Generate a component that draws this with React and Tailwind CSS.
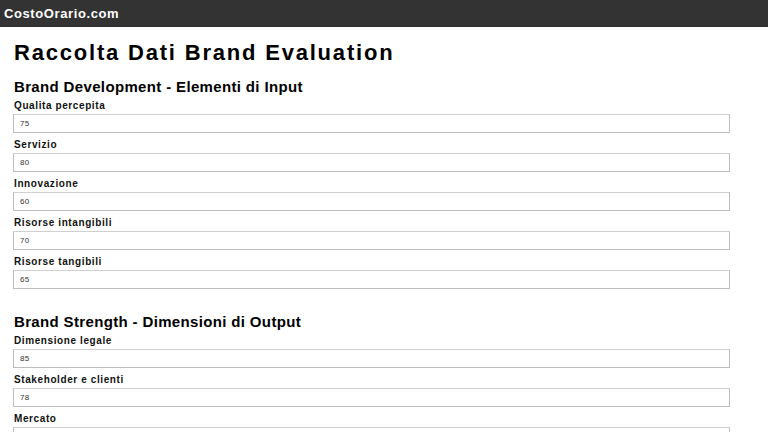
const sections = [
  {
    title: 'Brand Development - Elementi di Input',
    fields: [
      { label: 'Qualita percepita', value: '75' },
      { label: 'Servizio', value: '80' },
      { label: 'Innovazione', value: '60' },
      { label: 'Risorse intangibili', value: '70' },
      { label: 'Risorse tangibili', value: '65' },
    ],
  },
  {
    title: 'Brand Strength - Dimensioni di Output',
    fields: [
      { label: 'Dimensione legale', value: '85' },
      { label: 'Stakeholder e clienti', value: '78' },
      { label: 'Mercato', value: '72' },
      { label: 'Reputazione', value: '80' },
    ],
  },
];

function Field({ label, value }) {
  return (
    <div className="mb-[6px]">
      <label className="block text-[10px] leading-[12px] font-bold tracking-[0.6px] text-[#111] ml-[1px] mb-[2px]">{label}</label>
      <input
        type="text"
        defaultValue={value}
        className="block w-[717px] h-[19px] px-[6px] text-[8px] tracking-[0.3px] text-[#333] bg-white border border-[#bdbdbd] border-t-[#d0d0d0] outline-none"
        style={{ fontFamily: '"Liberation Sans", Arial, sans-serif' }}
      />
    </div>
  );
}

export default function App() {
  return (
    <div className="min-h-screen bg-white" style={{ fontFamily: '"Liberation Sans", Arial, sans-serif' }}>
      <header className="h-[27px] bg-[#333333] flex items-center px-[4px]">
        <span className="text-white font-bold text-[13px] tracking-[0.6px]">CostoOrario.com</span>
      </header>

      <main className="px-[13px] pt-[13px]">
        <h1 className="text-[22px] leading-[26px] font-bold tracking-[1.8px] text-black ml-[1px] mb-[12px]">
          Raccolta Dati Brand Evaluation
        </h1>

        {sections.map((s, i) => (
          <section key={s.title} className={i > 0 ? 'mt-[24px]' : ''}>
            <h2 className="text-[15px] leading-[18px] font-bold tracking-[0.35px] text-black ml-[1px] mb-[4px]">{s.title}</h2>
            {s.fields.map(f => (
              <Field key={f.label} label={f.label} value={f.value} />
            ))}
          </section>
        ))}
      </main>
    </div>
  );
}
